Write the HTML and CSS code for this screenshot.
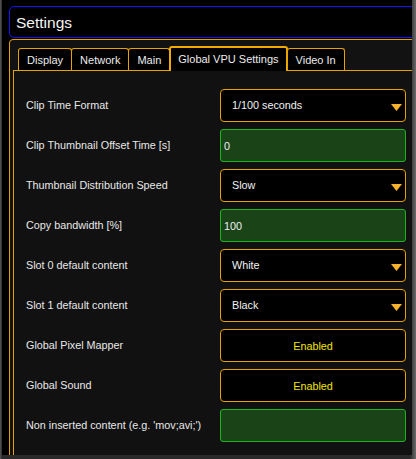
FILE: index.html
```html
<!DOCTYPE html>
<html>
<head>
<meta charset="utf-8">
<link rel="stylesheet" href="styles.css">
</head>
<body>
<div class="window">
  <div class="header">Settings</div>
  <div class="panel">
    <div class="tabs">
      <div class="tab">Display</div>
      <div class="tab">Network</div>
      <div class="tab">Main</div>
      <div class="tab active">Global VPU Settings</div>
      <div class="tab">Video In</div>
    </div>
    <div class="content">
      <div class="row">
        <div class="label">Clip Time Format</div>
        <div class="ctrl select"><span>1/100 seconds</span><svg class="arrow" width="11" height="7" viewBox="0 0 11 7"><polygon points="0,0 11,0 5.5,7" fill="#f5b02e"/></svg></div>
      </div>
      <div class="row">
        <div class="label">Clip Thumbnail Offset Time [s]</div>
        <div class="ctrl input">0</div>
      </div>
      <div class="row">
        <div class="label">Thumbnail Distribution Speed</div>
        <div class="ctrl select"><span>Slow</span><svg class="arrow" width="11" height="7" viewBox="0 0 11 7"><polygon points="0,0 11,0 5.5,7" fill="#f5b02e"/></svg></div>
      </div>
      <div class="row">
        <div class="label">Copy bandwidth [%]</div>
        <div class="ctrl input">100</div>
      </div>
      <div class="row">
        <div class="label">Slot 0 default content</div>
        <div class="ctrl select"><span>White</span><svg class="arrow" width="11" height="7" viewBox="0 0 11 7"><polygon points="0,0 11,0 5.5,7" fill="#f5b02e"/></svg></div>
      </div>
      <div class="row">
        <div class="label">Slot 1 default content</div>
        <div class="ctrl select"><span>Black</span><svg class="arrow" width="11" height="7" viewBox="0 0 11 7"><polygon points="0,0 11,0 5.5,7" fill="#f5b02e"/></svg></div>
      </div>
      <div class="row">
        <div class="label">Global Pixel Mapper</div>
        <div class="ctrl toggle">Enabled</div>
      </div>
      <div class="row">
        <div class="label">Global Sound</div>
        <div class="ctrl toggle">Enabled</div>
      </div>
      <div class="row">
        <div class="label">Non inserted content (e.g. 'mov;avi;')</div>
        <div class="ctrl input"></div>
      </div>
    </div>
  </div>
</div>
</body>
</html>
```
FILE: styles.css
```css
html, body {
  margin: 0;
  padding: 0;
}
body {
  width: 416px;
  height: 459px;
  background: linear-gradient(90deg, #5a5a5a 0, #2a2a2a 2px, #2a2a2a 410px, #6a6a6a 416px);
  font-family: "Liberation Sans", Arial, sans-serif;
  color: #f0f0f0;
  overflow: hidden;
}
.window {
  box-sizing: border-box;
  margin-left: 2px;
  width: 410px;
  height: 455px;
  background: #000;
  padding: 6px 0 0 7px;
  overflow: hidden;
}
.header {
  box-sizing: border-box;
  height: 32px;
  margin-right: -20px;
  border: 1px solid #1414ff;
  border-radius: 5px;
  padding: 1px 0 0 6px;
  display: flex;
  align-items: center;
  font-size: 15.5px;
  color: #f4f4f4;
}
.panel {
  margin-top: 1px;
  margin-right: -20px;
  height: 440px;
  border: 1px solid #e6a200;
  border-radius: 4px 0 0 0;
  background: #121212;
  padding: 8px 0 0 3px;
}
.tabs {
  display: flex;
  align-items: flex-end;
  height: 22px;
  margin-left: 5px;
  position: relative;
  z-index: 1;
}
.tab {
  box-sizing: border-box;
  height: 22px;
  padding: 0 8px;
  border: 1px solid #e6a200;
  border-bottom: none;
  border-radius: 3px 3px 0 0;
  background: #000;
  margin-right: -1px;
  display: flex;
  align-items: center;
  font-size: 11px;
  color: #ececec;
}
.tab.active {
  border: 2px solid #f0aa00;
  border-bottom: none;
  margin-bottom: -1px;
  height: 25px;
  padding: 0 7px 1px;
  background: #000;
}
.content {
  border-top: 1px solid #e6a200;
  border-left: 1px solid #e6a200;
  background: #111;
  padding: 18px 0 0 12px;
  display: flex;
  flex-direction: column;
  gap: 7px;
  height: 380px;
}
.row {
  display: flex;
  align-items: center;
  height: 33px;
}
.label {
  width: 194px;
  font-size: 10.8px;
  color: #e8e8e8;
  margin-top: -2px;
}
.ctrl {
  box-sizing: border-box;
  width: 186px;
  height: 33px;
  border-radius: 4px;
  display: flex;
  align-items: center;
  font-size: 10.8px;
}
.select {
  border: 1px solid #e6a200;
  background: #000;
  padding: 0 3px 0 11px;
  justify-content: space-between;
  color: #f2f2f2;
}
.select span {
  margin-top: -2px;
}
.arrow {
  margin-top: 4px;
}
.input {
  border: 1px solid #1cb51c;
  background: #1a4318;
  padding-left: 3px;
  color: #f0f0f0;
  border-radius: 3px;
}
.toggle {
  border: 1px solid #e6a200;
  background: #000;
  justify-content: center;
  color: #f2e600;
}
```
